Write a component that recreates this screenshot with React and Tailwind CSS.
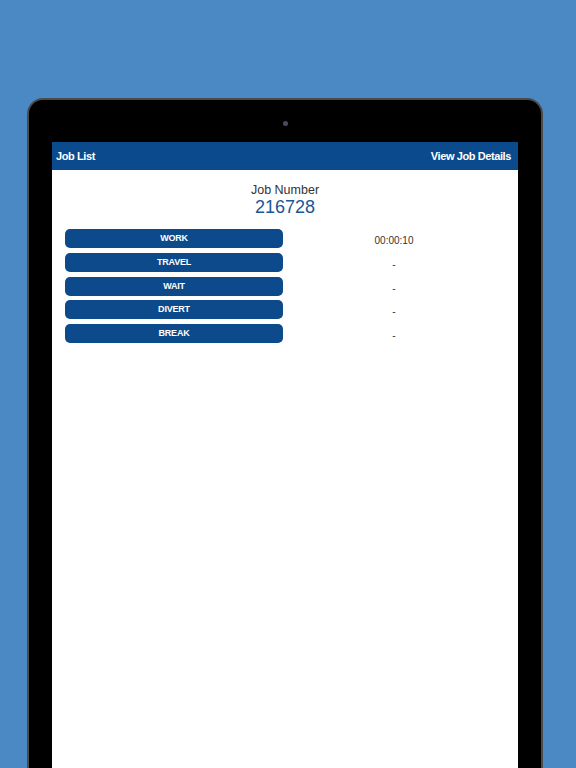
import React from 'react';

const rows = [
  { label: 'WORK', value: '00:00:10' },
  { label: 'TRAVEL', value: '-' },
  { label: 'WAIT', value: '-' },
  { label: 'DIVERT', value: '-' },
  { label: 'BREAK', value: '-' },
];

const TimeRow = ({ label, value }) => (
  <div className="flex items-center mb-[4.75px]">
    <button className="w-[218px] h-[19px] rounded-[5px] bg-[#0c4a8b] text-white text-[9px] font-bold tracking-[-0.2px] leading-none">
      {label}
    </button>
    <div className="flex-1 text-center text-[10px] text-[#333] pt-[5px] leading-none">{value}</div>
  </div>
);

export default function App() {
  return (
    <div
      className="h-[768px] overflow-hidden bg-[#4a89c3] pt-[98px] pl-[27px] pr-[33px] flex flex-col"
      style={{ fontFamily: '"Liberation Sans", Arial, sans-serif' }}
    >
      <div className="flex-1 flex flex-col bg-black rounded-t-[16px] border-2 border-b-0 border-[#4a4a4a] px-[23px]">
        {/* camera */}
        <div className="h-[42px] flex justify-center pt-[21px]">
          <div className="w-[5px] h-[5px] rounded-full bg-[#4b4a66]" />
        </div>

        {/* screen */}
        <div className="flex-1 bg-white flex flex-col">
          <div className="h-[28px] bg-[#0b4a8c] flex items-center justify-between pl-[4px] pr-[7px] text-white text-[11px] font-bold tracking-[-0.4px]">
            <span>Job List</span>
            <span>View Job Details</span>
          </div>

          <div className="px-[13px] pt-[13px]">
            <div className="text-center text-[12.5px] text-[#333] leading-[14px]">Job Number</div>
            <div className="text-center text-[18px] text-[#1b5596] leading-[20px]">216728</div>

            <div className="mt-[12px]">
              {rows.map((r) => (
                <TimeRow key={r.label} label={r.label} value={r.value} />
              ))}
            </div>
          </div>
        </div>
      </div>
    </div>
  );
}
